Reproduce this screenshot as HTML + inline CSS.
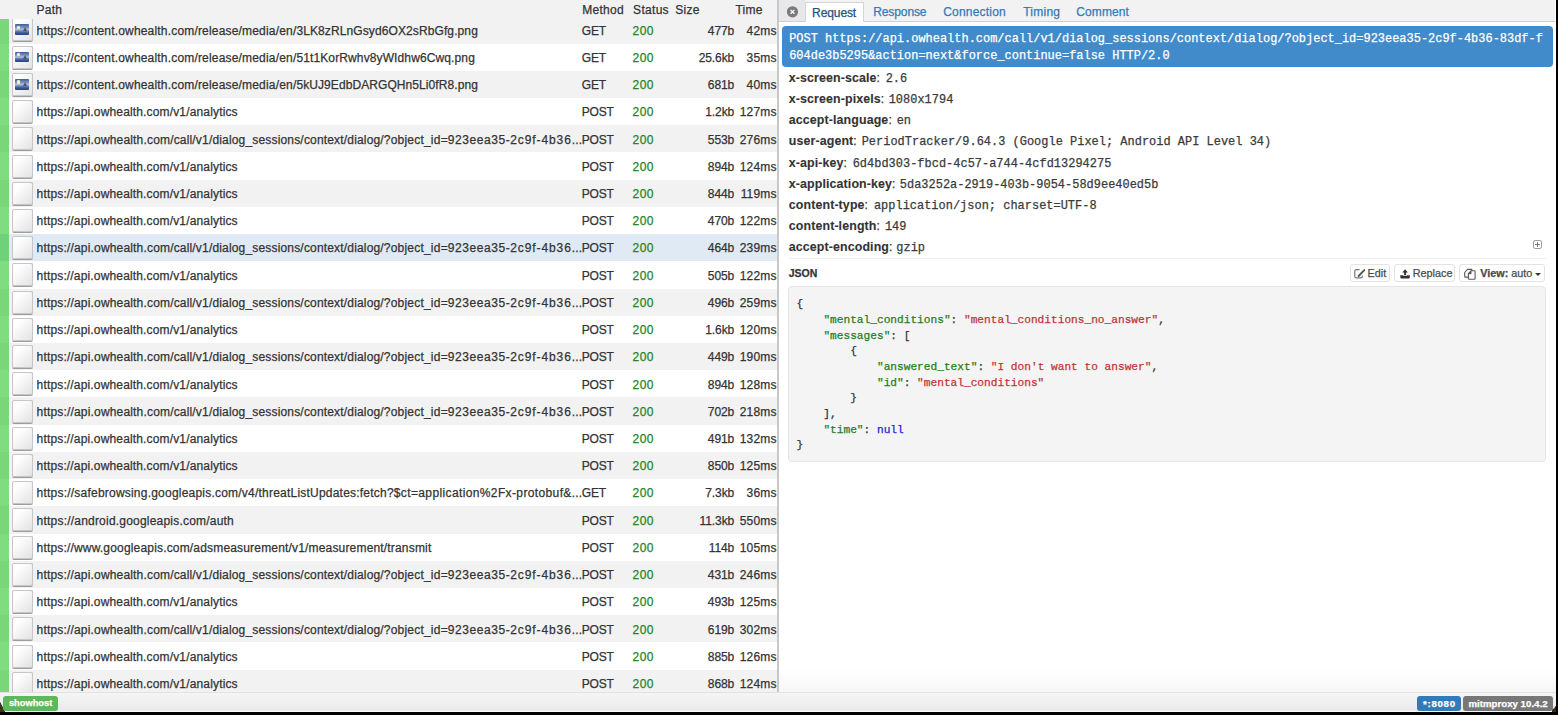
<!DOCTYPE html><html><head><meta charset="utf-8"><style>*{margin:0;padding:0;box-sizing:border-box}
html,body{width:1558px;height:715px;overflow:hidden;background:#fff}
body{position:relative;font-family:"Liberation Sans",sans-serif;color:#333;font-size:12px;-webkit-text-stroke:0.25px currentColor}
.lt{position:absolute;left:0;top:0;width:777px;height:693px;overflow:hidden;background:#fff}
.th{position:absolute;left:0;top:0;width:777px;height:19.3px;background:#f2f2f2}
.th span{position:absolute;top:2.6px;line-height:14px;white-space:nowrap;letter-spacing:0.3px}
.hp{left:36.4px}.hm{left:582.2px}.hs{left:633.1px}.hz{left:675.2px}.ht{left:735.4px}
.r{position:absolute;left:0;width:777px;height:27.22px;background:#fff}
.r.ev{background:#f2f2f2}
.r.sel{background:#dfeaf5}
.tls{display:none}
.tlsbar{position:absolute;left:0;top:19.3px;width:9px;height:674px;background:rgba(0,185,0,0.5)}
.r span.p,.r span.m,.r span.s,.r span.z,.r span.t{position:absolute;top:7.34px;line-height:14px;white-space:nowrap;letter-spacing:0.186px}
.p{left:36.6px;width:545px;overflow:hidden}
.m{left:581.8px;letter-spacing:-0.25px!important}
.s{left:632.6px;color:#248424;letter-spacing:0.45px!important}
.z{right:42.9px;text-align:right;letter-spacing:-0.1px!important}
.t{right:0.3px;text-align:right}
.ic{position:absolute;left:12.1px;top:2.1px;width:20.6px;height:23px;border-radius:2px;
 background:linear-gradient(135deg,#ffffff 25%,#ececec 70%,#e2e2e2);
 box-shadow:inset 0 0 0 1px #c6c6c6, inset -1px 0 0 #bdbdbd, 0 1px 0 #9c9c9c}
.ic.img i{position:absolute;left:3.1px;top:5.9px;width:13.7px;height:10.9px;border-radius:1px;
 background:linear-gradient(#3c5c9c,#7890c0 30%,#b0bfdc 52%,#6a84b8 64%,#3c5a98 80%,#24427f)}
.ic.img i:before{content:"";position:absolute;left:1.9px;top:1.5px;width:3.4px;height:3.4px;border-radius:50%;background:#eef2c4;box-shadow:0 0 1px #eef2c4}
.ic.img i:after{content:"";position:absolute;left:8.1px;top:3px;width:0;height:0;border-left:2.7px solid transparent;border-right:2.7px solid transparent;border-bottom:4.6px solid #55555c;border-radius:2px 2px 0 0}
.split{position:absolute;left:777px;top:0;width:2px;height:693px;background:#c8c8c8}
.rp{position:absolute;left:779px;top:0;width:776px;height:693px;background:#fff}
.tabs{position:absolute;left:0;top:0;width:776px;height:22px;background:#f2f2f2;border-bottom:1px solid #cfcfcf}
.closebg{position:absolute;left:0;top:0;width:25.5px;height:21px;background:#e8e8eb}
.xc{position:absolute;left:7.8px;top:6.1px;width:11.4px;height:11.4px;border-radius:50%;background:#777;color:#fff;font-size:11px;line-height:11.4px;text-align:center;font-weight:bold}
.tab{position:absolute;left:25.8px;top:2.2px;width:59.2px;height:19.8px;background:#fff;border:1px solid #d4d4d4;border-bottom:none;color:#23527c;padding-left:6.3px;line-height:14px;padding-top:2.5px;letter-spacing:-0.1px}
.tl{position:absolute;top:4.7px;line-height:14px;color:#337ab7;letter-spacing:0.3px}
.fl{position:absolute;left:3px;top:26px;width:770.6px;height:40.5px;border-radius:4px;background:#428bca;color:#fff;font-family:"Liberation Mono",monospace;font-size:11.93px;letter-spacing:0.024px;line-height:16.7px;padding-left:7.2px;padding-top:5.3px;white-space:nowrap}
.hd{position:absolute;left:10.4px;height:16px;width:700px;line-height:14px;white-space:nowrap}
.hd b{font-weight:bold;font-size:12.4px;letter-spacing:0.12px;margin-left:-0.6px;-webkit-text-stroke:0.1px currentColor}
.hd i{font-style:normal}
.hd span{position:absolute;top:1px;font-family:"Liberation Mono",monospace;font-size:11.93px;letter-spacing:0.03px;color:#3a3a3a}

.exp{position:absolute;left:754px;top:239.6px;width:9.4px;height:9.6px;border:1.2px solid #999;border-radius:2.2px}
.exp:before{content:"";position:absolute;left:3px;top:1px;width:1px;height:5.2px;background:#777}
.exp:after{content:"";position:absolute;left:1px;top:3.1px;width:5.2px;height:1px;background:#777}
.sep{position:absolute;left:9.8px;top:258.3px;width:757.7px;height:1px;background:#efefef}
.jl{position:absolute;left:9.7px;top:266.9px;font-weight:bold;font-size:10.5px;line-height:12px;color:#333}
.btn{position:absolute;top:263.5px;height:18.3px;border:1px solid #e3e3e3;border-radius:3px;background:#fff}
.bt{position:absolute;top:2.9px;font-size:10.8px;line-height:12px;white-space:nowrap;color:#4a4a4a}
.bt b{font-weight:bold}
.js{position:absolute;left:9.1px;top:286.3px;width:757.6px;height:175.8px;background:#f4f4f4;border:1px solid #e5e5e5;border-radius:4px;
 font-family:"Liberation Mono",monospace;font-size:11.16px;line-height:15.7px;padding-left:7.5px;padding-top:9.8px;color:#333;white-space:pre}
.js .g{color:#1f7d1f}.js .rd{color:#c03636}.js .bl{color:#2323dd}
.ft{position:absolute;left:0;top:692.3px;width:1558px;height:18.6px;background:linear-gradient(#f5f5f5,#e9e9e9);border-top:1px solid #e2e2e2}
.ft:after{content:"";position:absolute;left:0;bottom:-0.9px;width:100%;height:0.9px;background:#fafafa}
.rshade{position:absolute;left:779px;top:668px;width:777px;height:24.3px;background:linear-gradient(rgba(0,0,0,0),rgba(0,0,0,0.035))}
.lb{position:absolute;top:2.7px;height:15.5px;border-radius:3px;color:#fff;font-weight:bold;font-size:9.7px;line-height:15.5px;text-align:center;white-space:nowrap}
.bb{position:absolute;left:0;top:711.6px;width:1558px;height:4px;background:#000}
.br{position:absolute;left:1555.8px;top:0;width:3px;height:715px;background:#000}
.corner{position:absolute;left:0;top:702px;width:4.5px;height:10px;z-index:5;background:linear-gradient(to top right,#3d3719 48%,rgba(61,55,25,0) 56%)}
.corner2{position:absolute;left:1552px;top:706px;width:4px;height:6px;z-index:5;background:radial-gradient(circle at -1px -1px,rgba(0,0,0,0) 4px,#3a2a18 5px)}
.lb{z-index:6}
.ied{position:absolute;left:4.2px;top:5.6px;width:8px;height:8px;border:1.3px solid #555;border-radius:1.5px}
.iup{position:absolute;left:6.3px;top:5px;width:9.6px;height:10px}
.icp{position:absolute;left:5.8px;top:4.6px;width:10.4px;height:10px}
.caret{position:absolute;left:75.2px;top:8.3px;width:0;height:0;border-left:3px solid transparent;border-right:3px solid transparent;border-top:3.3px solid #333}

.isvg{position:absolute;overflow:visible}
.xsvg{position:absolute;left:0;top:0}
</style></head><body>
<div class="lt">
<div class="r ev" style="top:16.38px"><span class="ic img"><i></i></span><span class="p"><span style="letter-spacing:0.181px">https://content.owhealth.com/release/media/en/</span><span style="letter-spacing:0.105px">3LK8zRLnGsyd6OX2sRbGfg.png</span></span><span class="m">GET</span><span class="s">200</span><span class="z">477b</span><span class="t">42ms</span></div>
<div class="r" style="top:43.60px"><span class="ic img"><i></i></span><span class="p"><span style="letter-spacing:0.181px">https://content.owhealth.com/release/media/en/</span><span style="letter-spacing:0.119px">51t1KorRwhv8yWIdhw6Cwq.png</span></span><span class="m">GET</span><span class="s">200</span><span class="z">25.6kb</span><span class="t">35ms</span></div>
<div class="r ev" style="top:70.82px"><span class="ic img"><i></i></span><span class="p"><span style="letter-spacing:0.181px">https://content.owhealth.com/release/media/en/</span><span style="letter-spacing:0.079px">5kUJ9EdbDARGQHn5Li0fR8.png</span></span><span class="m">GET</span><span class="s">200</span><span class="z">681b</span><span class="t">40ms</span></div>
<div class="r" style="top:98.04px"><span class="ic doc"></span><span class="p"><span style="letter-spacing:0.155px">https://api.owhealth.com/v1/analytics</span></span><span class="m">POST</span><span class="s">200</span><span class="z">1.2kb</span><span class="t">127ms</span></div>
<div class="r ev" style="top:125.26px"><span class="ic doc"></span><span class="p"><span style="letter-spacing:0.173px">https://api.owhealth.com/call/v1/dialog_sessions/context/dialog/?</span><span style="letter-spacing:0.208px">object_id=</span><span style="letter-spacing:0.549px">923eea35-</span><span style="letter-spacing:0.907px">2c9f-4b36</span><span style="letter-spacing:0.2px">...</span></span><span class="m">POST</span><span class="s">200</span><span class="z">553b</span><span class="t">276ms</span></div>
<div class="r" style="top:152.48px"><span class="ic doc"></span><span class="p"><span style="letter-spacing:0.155px">https://api.owhealth.com/v1/analytics</span></span><span class="m">POST</span><span class="s">200</span><span class="z">894b</span><span class="t">124ms</span></div>
<div class="r ev" style="top:179.70px"><span class="ic doc"></span><span class="p"><span style="letter-spacing:0.155px">https://api.owhealth.com/v1/analytics</span></span><span class="m">POST</span><span class="s">200</span><span class="z">844b</span><span class="t">119ms</span></div>
<div class="r" style="top:206.92px"><span class="ic doc"></span><span class="p"><span style="letter-spacing:0.155px">https://api.owhealth.com/v1/analytics</span></span><span class="m">POST</span><span class="s">200</span><span class="z">470b</span><span class="t">122ms</span></div>
<div class="r ev sel" style="top:234.14px"><span class="ic doc"></span><span class="p"><span style="letter-spacing:0.173px">https://api.owhealth.com/call/v1/dialog_sessions/context/dialog/?</span><span style="letter-spacing:0.208px">object_id=</span><span style="letter-spacing:0.549px">923eea35-</span><span style="letter-spacing:0.907px">2c9f-4b36</span><span style="letter-spacing:0.2px">...</span></span><span class="m">POST</span><span class="s">200</span><span class="z">464b</span><span class="t">239ms</span></div>
<div class="r" style="top:261.36px"><span class="ic doc"></span><span class="p"><span style="letter-spacing:0.155px">https://api.owhealth.com/v1/analytics</span></span><span class="m">POST</span><span class="s">200</span><span class="z">505b</span><span class="t">122ms</span></div>
<div class="r ev" style="top:288.58px"><span class="ic doc"></span><span class="p"><span style="letter-spacing:0.173px">https://api.owhealth.com/call/v1/dialog_sessions/context/dialog/?</span><span style="letter-spacing:0.208px">object_id=</span><span style="letter-spacing:0.549px">923eea35-</span><span style="letter-spacing:0.907px">2c9f-4b36</span><span style="letter-spacing:0.2px">...</span></span><span class="m">POST</span><span class="s">200</span><span class="z">496b</span><span class="t">259ms</span></div>
<div class="r" style="top:315.80px"><span class="ic doc"></span><span class="p"><span style="letter-spacing:0.155px">https://api.owhealth.com/v1/analytics</span></span><span class="m">POST</span><span class="s">200</span><span class="z">1.6kb</span><span class="t">120ms</span></div>
<div class="r ev" style="top:343.02px"><span class="ic doc"></span><span class="p"><span style="letter-spacing:0.173px">https://api.owhealth.com/call/v1/dialog_sessions/context/dialog/?</span><span style="letter-spacing:0.208px">object_id=</span><span style="letter-spacing:0.549px">923eea35-</span><span style="letter-spacing:0.907px">2c9f-4b36</span><span style="letter-spacing:0.2px">...</span></span><span class="m">POST</span><span class="s">200</span><span class="z">449b</span><span class="t">190ms</span></div>
<div class="r" style="top:370.24px"><span class="ic doc"></span><span class="p"><span style="letter-spacing:0.155px">https://api.owhealth.com/v1/analytics</span></span><span class="m">POST</span><span class="s">200</span><span class="z">894b</span><span class="t">128ms</span></div>
<div class="r ev" style="top:397.46px"><span class="ic doc"></span><span class="p"><span style="letter-spacing:0.173px">https://api.owhealth.com/call/v1/dialog_sessions/context/dialog/?</span><span style="letter-spacing:0.208px">object_id=</span><span style="letter-spacing:0.549px">923eea35-</span><span style="letter-spacing:0.907px">2c9f-4b36</span><span style="letter-spacing:0.2px">...</span></span><span class="m">POST</span><span class="s">200</span><span class="z">702b</span><span class="t">218ms</span></div>
<div class="r" style="top:424.68px"><span class="ic doc"></span><span class="p"><span style="letter-spacing:0.155px">https://api.owhealth.com/v1/analytics</span></span><span class="m">POST</span><span class="s">200</span><span class="z">491b</span><span class="t">132ms</span></div>
<div class="r ev" style="top:451.90px"><span class="ic doc"></span><span class="p"><span style="letter-spacing:0.155px">https://api.owhealth.com/v1/analytics</span></span><span class="m">POST</span><span class="s">200</span><span class="z">850b</span><span class="t">125ms</span></div>
<div class="r" style="top:479.12px"><span class="ic doc"></span><span class="p"><span style="letter-spacing:0.217px">https://safebrowsing.googleapis.com/v4/threatListUpdates:fetch?</span><span style="letter-spacing:0.374px">$ct=application%2Fx-protobuf&amp;</span><span style="letter-spacing:0.2px">...</span></span><span class="m">GET</span><span class="s">200</span><span class="z">7.3kb</span><span class="t">36ms</span></div>
<div class="r ev" style="top:506.34px"><span class="ic doc"></span><span class="p"><span style="letter-spacing:0.208px">https://android.googleapis.com/auth</span></span><span class="m">POST</span><span class="s">200</span><span class="z">11.3kb</span><span class="t">550ms</span></div>
<div class="r" style="top:533.56px"><span class="ic doc"></span><span class="p"><span style="letter-spacing:0.174px">https://www.googleapis.com/adsmeasurement/v1/measurement/transmit</span></span><span class="m">POST</span><span class="s">200</span><span class="z">114b</span><span class="t">105ms</span></div>
<div class="r ev" style="top:560.78px"><span class="ic doc"></span><span class="p"><span style="letter-spacing:0.173px">https://api.owhealth.com/call/v1/dialog_sessions/context/dialog/?</span><span style="letter-spacing:0.208px">object_id=</span><span style="letter-spacing:0.549px">923eea35-</span><span style="letter-spacing:0.907px">2c9f-4b36</span><span style="letter-spacing:0.2px">...</span></span><span class="m">POST</span><span class="s">200</span><span class="z">431b</span><span class="t">246ms</span></div>
<div class="r" style="top:588.00px"><span class="ic doc"></span><span class="p"><span style="letter-spacing:0.155px">https://api.owhealth.com/v1/analytics</span></span><span class="m">POST</span><span class="s">200</span><span class="z">493b</span><span class="t">125ms</span></div>
<div class="r ev" style="top:615.22px"><span class="ic doc"></span><span class="p"><span style="letter-spacing:0.173px">https://api.owhealth.com/call/v1/dialog_sessions/context/dialog/?</span><span style="letter-spacing:0.208px">object_id=</span><span style="letter-spacing:0.549px">923eea35-</span><span style="letter-spacing:0.907px">2c9f-4b36</span><span style="letter-spacing:0.2px">...</span></span><span class="m">POST</span><span class="s">200</span><span class="z">619b</span><span class="t">302ms</span></div>
<div class="r" style="top:642.44px"><span class="ic doc"></span><span class="p"><span style="letter-spacing:0.155px">https://api.owhealth.com/v1/analytics</span></span><span class="m">POST</span><span class="s">200</span><span class="z">885b</span><span class="t">126ms</span></div>
<div class="r ev" style="top:669.66px"><span class="ic doc"></span><span class="p"><span style="letter-spacing:0.155px">https://api.owhealth.com/v1/analytics</span></span><span class="m">POST</span><span class="s">200</span><span class="z">868b</span><span class="t">124ms</span></div>
<div class="th"><span class="hp">Path</span><span class="hm">Method</span><span class="hs">Status</span><span class="hz">Size</span><span class="ht">Time</span></div>
<div class="tlsbar"></div></div>
<div class="split"></div>
<div class="rp">
<div class="tabs"><div class="closebg"><svg class="xsvg" width="25" height="21" viewBox="0 0 25 21"><circle cx="13.5" cy="11.8" r="5.6" fill="#7a7a7a"/><path d="M11.6 9.9 L15.4 13.7 M15.4 9.9 L11.6 13.7" stroke="#fff" stroke-width="1.25"/></svg></div>
<div class="tab act">Request</div>
<span class="tl" style="left:94.2px;letter-spacing:-0.1px">Response</span>
<span class="tl" style="left:164.2px;letter-spacing:0.2px">Connection</span>
<span class="tl" style="left:244.2px;letter-spacing:0.25px">Timing</span>
<span class="tl" style="left:297.3px;letter-spacing:0.1px">Comment</span>
</div>
<div class="fl">POST https://api.owhealth.com/call/v1/dialog_sessions/context/dialog/?object_id=923eea35-2c9f-4b36-83df-f<br>604de3b5295&amp;action=next&amp;force_continue=false HTTP/2.0</div>
<div class="hd" style="top:70.80px"><b>x-screen-scale</b><i>:</i><span style="left:96.3px">2.6</span></div>
<div class="hd" style="top:91.99px"><b>x-screen-pixels</b><i>:</i><span style="left:99.3px">1080x1794</span></div>
<div class="hd" style="top:113.18px"><b>accept-language</b><i>:</i><span style="left:107.3px">en</span></div>
<div class="hd" style="top:134.37px"><b>user-agent</b><i>:</i><span style="left:72.3px">PeriodTracker/9.64.3 (Google Pixel; Android API Level 34)</span></div>
<div class="hd" style="top:155.56px"><b>x-api-key</b><i>:</i><span style="left:63.3px">6d4bd303-fbcd-4c57-a744-4cfd13294275</span></div>
<div class="hd" style="top:176.75px"><b>x-application-key</b><i>:</i><span style="left:110.4px">5da3252a-2919-403b-9054-58d9ee40ed5b</span></div>
<div class="hd" style="top:197.94px"><b>content-type</b><i>:</i><span style="left:84.5px">application/json; charset=UTF-8</span></div>
<div class="hd" style="top:219.13px"><b>content-length</b><i>:</i><span style="left:95.5px">149</span></div>
<div class="hd" style="top:240.32px"><b>accept-encoding</b><i>:</i><span style="left:106.9px">gzip</span></div>
<div class="exp"><i></i></div>
<div class="sep"></div>
<div class="jl">JSON</div>
<div class="btn" style="left:570.9px;width:40.6px"><svg class="isvg" style="left:0;top:0" width="40" height="18" viewBox="0 0 40 18"><path d="M8.6 4.7 H5.2 Q3.8 4.7 3.8 6.1 V11.6 Q3.8 12.8 5.1 12.8 H9.9 Q11.3 12.8 11.3 11.5 V10.4" fill="none" stroke="#777" stroke-width="1.2"/><path d="M7.6 11 L13.3 5.1" stroke="#555" stroke-width="1.9" stroke-linecap="round"/></svg><span class="bt" style="left:16.7px">Edit</span></div>
<div class="btn" style="left:615.4px;width:60.6px"><svg class="isvg" style="left:0;top:0" width="60" height="18" viewBox="0 0 60 18"><path d="M10.1 4.3 L12.9 7.5 H11.1 V10.3 H9.1 V7.5 H7.3 Z" fill="#333"/><path d="M5.3 10.3 H8.5 V11.1 H11.7 V10.3 H14.8 V12.3 Q14.8 13.5 13.6 13.5 H6.5 Q5.3 13.5 5.3 12.3 Z" fill="#333"/></svg><span class="bt" style="left:17.4px">Replace</span></div>
<div class="btn" style="left:679.8px;width:86.6px"><svg class="isvg" style="left:0;top:0" width="86" height="18" viewBox="0 0 86 18"><path d="M8.6 12.1 H5.4 Q4.7 12.1 4.7 11.4 V7.5 L7.5 4.4 H11.3 Q12 4.4 12 5.1 V5.8" fill="none" stroke="#5a5a5a" stroke-width="1.1" stroke-linejoin="round"/><path d="M10.9 5.8 H14.4 Q15.1 5.8 15.1 6.5 V13.6 Q15.1 14.3 14.4 14.3 H9.1 Q8.4 14.3 8.4 13.6 V8.6 Z M10.9 5.8 V8.6 H8.4" fill="none" stroke="#5a5a5a" stroke-width="1.1" stroke-linejoin="round"/></svg><span class="bt" style="left:20.5px"><b>View:</b> auto</span><span class="caret"></span></div>
<pre class="js"><span class="k">{</span>
    <span class="g">"mental_conditions"</span>: <span class="rd">"mental_conditions_no_answer"</span>,
    <span class="g">"messages"</span>: [
        {
            <span class="g">"answered_text"</span>: <span class="rd">"I don't want to answer"</span>,
            <span class="g">"id"</span>: <span class="rd">"mental_conditions"</span>
        }
    ],
    <span class="g">"time"</span>: <span class="bl">null</span>
}</pre>
</div>

<div class="rshade"></div>
<div class="ft"><span class="lb" style="left:3.1px;width:55px;background:#5cb85c;font-size:9.3px">showhost</span>
<span class="lb" style="left:1417.2px;width:43.7px;background:#337ab7;letter-spacing:0.7px;text-indent:0.7px">*:8080</span>
<span class="lb" style="left:1463.1px;width:89.8px;background:#777">mitmproxy 10.4.2</span></div>

<div class="bb"></div><div class="br"></div><div class="corner"></div><div class="corner2"></div>
</body></html>
